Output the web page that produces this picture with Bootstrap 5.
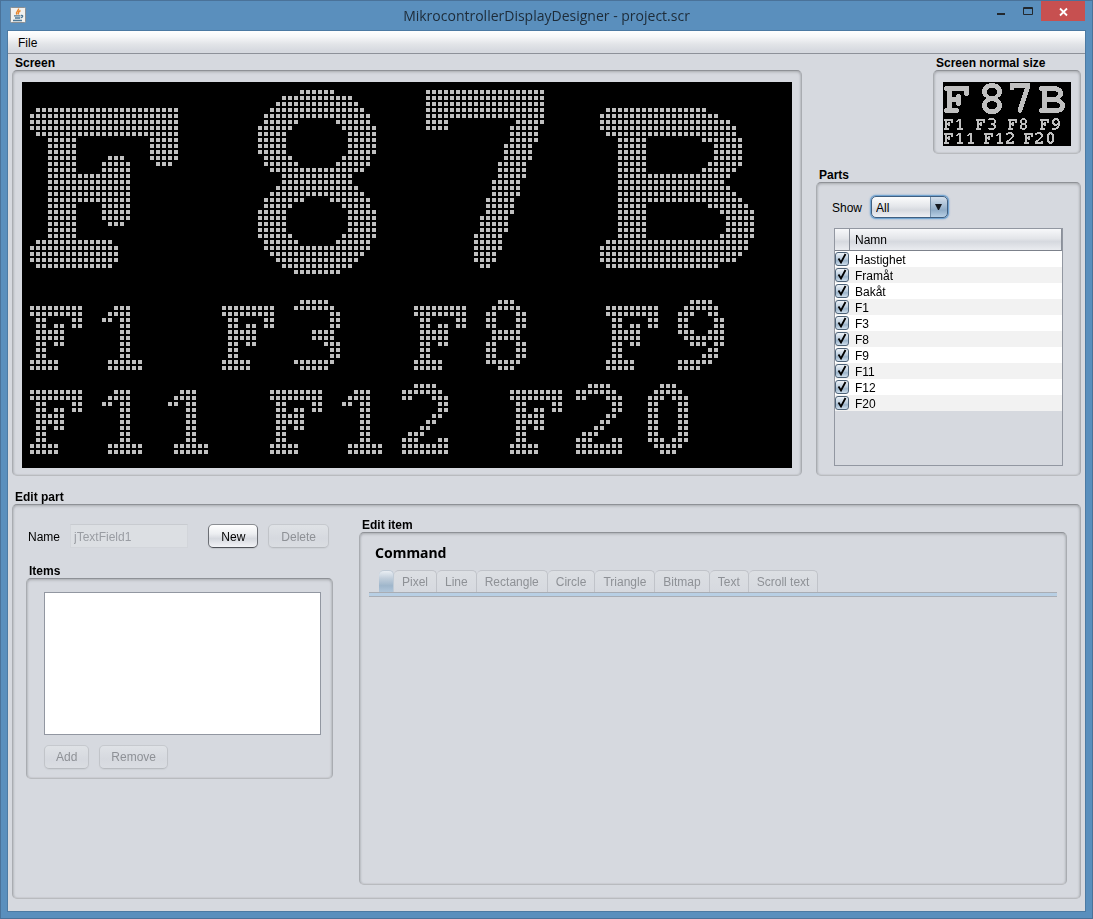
<!DOCTYPE html>
<html lang="en">
<head>
<meta charset="utf-8">
<meta name="viewport" content="width=device-width, initial-scale=1">
<title>MikrocontrollerDisplayDesigner - project.scr</title>
<link href="https://cdn.jsdelivr.net/npm/bootstrap@5.3.0/dist/css/bootstrap.min.css" rel="stylesheet">
<style>
  body { font: 12px/16px "Liberation Sans", Arial, sans-serif; color: #000; background: #5a8fbd; }
  .window-frame { border: 1px solid #4a7299; padding: 0 7px 7px; }
  .title-bar { height: 30px; }
  .title-bar h1 { font: 14px/30px "Open Sans", "Segoe UI", sans-serif; color: #1d2b38; }
  .app-icon { left: 2px; top: 6px; }
  .win-buttons { top: 0; right: 0; }
  .win-buttons button { border: 0; background: none; padding: 0; height: 20px; width: 27px; display: block; }
  .win-buttons .win-close { background: #c75050; width: 44px; }
  .client { background: #d6d9df; outline: 1px solid #4c7aa3; }
  .menu-strip { height: 23px; border-bottom: 1px solid #8d9199; background: linear-gradient(#fff 0%, #f7f8f9 25%, #e2e4e8 60%, #d6d9df 90%); padding: 4px 10px 2px; }
  .menu-strip a { color: #000; text-decoration: none; }
  .workspace { padding: 0 4px 12px; }
  .panel-title { font-size: 12px; line-height: 14px; padding-top: 2px; font-weight: bold; margin: 0 0 0 3px; }
  .panel-box { border: 1px solid; border-color: #8e9196 #a9acb1 #b9bbbf; border-radius: 5px;
    box-shadow: inset 0 2px 3px -1px #a6a9ae, inset 2px 0 2px -1px #bcbfc4, inset -2px 0 2px -1px #bcbfc4, inset 0 -1px 1px #cbced3; }
  .lcd-box { padding: 11px 9px 7px; }
  .lcd-box canvas { display: block; background: #000; }
  .main-gap { gap: 14px; }
  .section-gap { margin-top: 12px; }
  .parts-box { padding: 12px 17px 9px 15px; }
  .parts-box label, .name-row label { line-height: 14px; padding-top: 2px; }
  .show-label { width: 39px; }
  .show-select { appearance: none; width: 77px; height: 22px; padding: 1px 4px 0; font: inherit; color: #000;
    border: 1px solid #3f5f80; border-radius: 5px; box-shadow: 0 0 0 1px #73a4d1, 0 0 2px 1px #73a4d1; outline: 0;
    background: url("data:image/svg+xml,%3Csvg xmlns='http://www.w3.org/2000/svg' width='17' height='22'%3E%3Cpath d='M5 8h7l-3 6h-1z' fill='%23151a20'/%3E%3C/svg%3E") right center no-repeat,
      linear-gradient(90deg, #7590aa 0 1px, transparent 1px) right / 17px 100% no-repeat,
      linear-gradient(#d5e0ec, #a5bdd3 45%, #8facc7 65%, #b8d0e5) right / 17px 100% no-repeat,
      linear-gradient(#fbfcfc, #e5e7eb 45%, #d6d9df 65%, #eff0f4); }
  .show-row { height: 24px; }
  .parts-list { margin: 9px 0 0 2px; border: 1px solid #9297a1; }
  .parts-list table { width: 100%; border-collapse: separate; border-spacing: 0; table-layout: fixed; }
  .parts-list th { height: 22px; padding: 0 5px; font-weight: normal; border-bottom: 1px solid #7c818b; border-right: 1px solid #8a8f99;
    background: linear-gradient(#f7f8fa, #e3e5e9 45%, #d6d9df 60%, #eaecf0); }
  .parts-list th:first-child { width: 15px; padding: 0; }
  .parts-list td { height: 16px; padding: 0 5px; background: #fff; }
  .parts-list td:first-child { padding: 0; }
  .parts-list td label { display: block; }
  .parts-list tr:nth-child(even) td { background: #f2f2f2; }
  .tick { appearance: none; display: block; margin: 0; width: 14px; height: 14px; border: 1px solid #4d6277; border-radius: 3px;
    background: url("data:image/svg+xml,%3Csvg xmlns='http://www.w3.org/2000/svg' width='12' height='12'%3E%3Cpath d='M2.500 5.500l2.500 4L9.500 1' fill='none' stroke='%23000' stroke-width='1.800'/%3E%3C/svg%3E"), linear-gradient(#eef3f8, #b9cbdc 50%, #9db5cb 65%, #d0e0ee); }
  .edit-box { padding: 11px 13px 13px; gap: 26px; }
  .edit-left { width: 307px; }
  .name-row { margin-top: 8px; padding: 0 4px 0 2px; height: 24px; gap: 10px; }
  .name-input { width: 118px; height: 24px; font: inherit; color: #9a9da3; background: #dcdfe3; border: 1px solid #d2d5da; border-top-color: #c8cbd0; padding: 1px 3px 0; }
  .push-btn { height: 24px; border: 1px solid; border-radius: 5px; font: inherit; padding: 0 11px;
    color: #000; border-color: #8b8e93 #6b6e74 #4f5258; background: linear-gradient(#fff, #eceef1 40%, #d6d9df 62%, #f2f3f6); box-shadow: 0 1px 1px #c3c6cb; }
  .name-row .push-btn { padding: 1px 12px 0; }
  .push-btn:disabled { color: #8e9196; border-color: #c6c9ce #c1c4c9 #b8bbc0; background: linear-gradient(#dfe2e6, #d6d9df 60%, #dadde2); box-shadow: 0 1px 1px #cdd0d5; }
  .items-gap { margin-top: 14px; }
  .items-box { padding: 13px 11px 9px 17px; }
  .items-list { width: 100%; height: 143px; border: 1px solid #9297a1; background: #fff; display: block; padding: 0; overflow: auto; border-radius: 0; appearance: none; }
  .item-actions { gap: 10px; padding-top: 10px; }
  .item-box { padding: 10px 9px; }
  .command-title { font: bold 14px/20px "Noto Sans", Tahoma, sans-serif; margin: 0 0 7px 6px; }
  .tab-strip { padding-left: 10px; border-bottom: 1px solid #a9adb4; }
  .tab-strip button { height: 22px; font: inherit; color: #8e9196; padding: 0 8px; background: linear-gradient(#dcdfe3, #d6d9df); border: 1px solid #c0c3c9; border-width: 1px 1px 0 0; border-radius: 5px 5px 0 0; }
  .tab-strip button.tab-current { width: 15px; padding: 0; border-color: #c0cbd6; background: linear-gradient(#e9eef3, #c1cedb 35%, #9fb6cb 70%, #b0c6da); }
  .tab-rule { height: 4px; background: #b8cfe4; border-bottom: 1px solid #a9adb4; }
</style>
</head>
<body>
<div class="window-frame d-flex flex-column min-vh-100">
  <header class="title-bar position-relative">
    <svg class="app-icon position-absolute" width="16" height="16" viewBox="0 0 16 16" aria-hidden="true">
      <rect x=".5" y=".5" width="15" height="15" rx="1" fill="#f1f1ef" stroke="#8b8f92"/>
      <path d="M8.500 1.500c1 2-3.500 3-1.500 6M10.500 3.500c-3 1.500-2 2-2 4" fill="none" stroke="#e8852c" stroke-width="1.400"/>
      <path d="M4 8.800h6.500M5 11h5M3 13.500h9M11 8.500c2.500-.5 2 2-.3 2.300" fill="none" stroke="#4d7896" stroke-width="1.300"/>
    </svg>
    <h1 class="m-0 text-center">MikrocontrollerDisplayDesigner - project.scr</h1>
    <div class="win-buttons position-absolute d-flex">
      <button type="button" aria-label="Minimize"><svg class="d-block" width="27" height="20"><path d="M10 12h8v2h-8z" fill="#22282e"/></svg></button>
      <button type="button" aria-label="Maximize"><svg class="d-block" width="27" height="20"><path d="M9.500 6.500h9v7h-9zM9 7.500h10" fill="none" stroke="#22282e"/></svg></button>
      <button type="button" class="win-close" aria-label="Close"><svg class="d-block" width="44" height="20"><path d="M19 7.500l7 7M26 7.500l-7 7" stroke="#fff" stroke-width="1.800"/></svg></button>
    </div>
  </header>

  <div class="client d-flex flex-column flex-grow-1">
    <nav class="menu-strip"><a href="#">File</a></nav>
    <main class="workspace d-flex flex-column flex-grow-1">
      <div class="d-flex main-gap">
        <section>
          <h2 class="panel-title">Screen</h2>
          <div class="panel-box lcd-box"><canvas id="screen" width="770" height="386" role="img" aria-label="Display, enlarged"></canvas></div>
        </section>
        <div class="d-flex flex-column flex-grow-1">
          <section class="align-self-end">
            <h2 class="panel-title">Screen normal size</h2>
            <div class="panel-box lcd-box"><canvas id="thumb" width="128" height="64" role="img" aria-label="Display, normal size"></canvas></div>
          </section>
          <section class="section-gap d-flex flex-column flex-grow-1">
            <h2 class="panel-title">Parts</h2>
            <div class="panel-box parts-box d-flex flex-column flex-grow-1">
              <div class="show-row d-flex align-items-center">
                <label class="show-label" for="show">Show</label>
                <select id="show" class="show-select"><option>All</option></select>
              </div>
              <div class="parts-list flex-grow-1">
                <table>
                  <thead><tr><th aria-label="Visible"></th><th>Namn</th></tr></thead>
                  <tbody>
                    <tr><td><input class="tick" type="checkbox" id="p1" checked></td><td><label for="p1">Hastighet</label></td></tr>
                    <tr><td><input class="tick" type="checkbox" id="p2" checked></td><td><label for="p2">Framåt</label></td></tr>
                    <tr><td><input class="tick" type="checkbox" id="p3" checked></td><td><label for="p3">Bakåt</label></td></tr>
                    <tr><td><input class="tick" type="checkbox" id="p4" checked></td><td><label for="p4">F1</label></td></tr>
                    <tr><td><input class="tick" type="checkbox" id="p5" checked></td><td><label for="p5">F3</label></td></tr>
                    <tr><td><input class="tick" type="checkbox" id="p6" checked></td><td><label for="p6">F8</label></td></tr>
                    <tr><td><input class="tick" type="checkbox" id="p7" checked></td><td><label for="p7">F9</label></td></tr>
                    <tr><td><input class="tick" type="checkbox" id="p8" checked></td><td><label for="p8">F11</label></td></tr>
                    <tr><td><input class="tick" type="checkbox" id="p9" checked></td><td><label for="p9">F12</label></td></tr>
                    <tr><td><input class="tick" type="checkbox" id="p10" checked></td><td><label for="p10">F20</label></td></tr>
                  </tbody>
                </table>
              </div>
            </div>
          </section>
        </div>
      </div>

      <section class="section-gap d-flex flex-column flex-grow-1">
        <h2 class="panel-title">Edit part</h2>
        <div class="panel-box edit-box d-flex flex-grow-1">
          <div class="edit-left flex-shrink-0">
            <div class="name-row d-flex align-items-center">
              <label for="part-name">Name</label>
              <input class="name-input" id="part-name" type="text" value="jTextField1" disabled>
              <button type="button" class="push-btn ms-auto">New</button>
              <button type="button" class="push-btn" disabled>Delete</button>
            </div>
            <section class="items-gap">
              <h3 class="panel-title">Items</h3>
              <div class="panel-box items-box">
                <select class="items-list" size="8" aria-label="Items"></select>
                <div class="item-actions d-flex">
                  <button type="button" class="push-btn" disabled>Add</button>
                  <button type="button" class="push-btn" disabled>Remove</button>
                </div>
              </div>
            </section>
          </div>
          <section class="d-flex flex-column flex-grow-1">
            <h3 class="panel-title">Edit item</h3>
            <div class="panel-box item-box flex-grow-1">
              <h4 class="command-title">Command</h4>
              <div class="tab-strip d-flex" role="tablist">
                <button type="button" role="tab" class="tab-current" aria-label="None" aria-selected="true" disabled></button>
                <button type="button" role="tab" disabled>Pixel</button>
                <button type="button" role="tab" disabled>Line</button>
                <button type="button" role="tab" disabled>Rectangle</button>
                <button type="button" role="tab" disabled>Circle</button>
                <button type="button" role="tab" disabled>Triangle</button>
                <button type="button" role="tab" disabled>Bitmap</button>
                <button type="button" role="tab" disabled>Text</button>
                <button type="button" role="tab" disabled>Scroll text</button>
              </div>
              <div class="tab-rule"></div>
            </div>
          </section>
        </div>
      </section>
    </main>
  </div>
</div>
<script src="https://cdn.jsdelivr.net/npm/bootstrap@5.3.0/dist/js/bootstrap.bundle.min.js"></script>
<script>
// Display fonts: rows are separated by "/", each row lists lit column runs; "*n" repeats a row.
const glyphs = {
  bigF: "1-24/0-24*3/1-24/3-7 20-24*3/3-7 13-15 20-24/3-7 12-16 21-23/3-7 12-16/3-16*5/3-7 12-16*3/3-7 13-15/3-7*2/1-13/0-14*3/1-13",
  big8: "7-12/4-15/3-16/2-17/1-18/1-6 13-18/0-5 14-19/0-4 15-19*4/1-5 14-18/1-6 13-18/2-17/4-15*2/3-16/2-17/1-7 12-18/1-5 14-18/0-4 15-19*4/0-5 14-19/1-6 13-18/1-18/2-17/3-16/4-15/6-13",
  big7: "0-19*5/0-3 15-19/0-3 14-18/14-18*2/13-17*3/12-16*3/11-15*3/10-14*3/9-13*3/8-12*3/8-11*2/9-10",
  bigB: "1-17/0-19/0-21/0-22/1-22/3-7 17-23/3-7 19-23*3/3-7 18-23/3-7 17-22/3-21/3-20/3-21/3-22/3-23/3-7 18-24/3-7 20-25/3-7 21-25*3/3-7 20-25/1-24/0-24/0-23/0-22/1-19",
  F: "0-8*2/1-2 7-8/1-2 4-5 7-8/1-5*2/1-2 4-5/1-2*2/0-4*2",
  1: "2-4/1-4/0-1 3-4/3-4*6/1-6*2",
  3: "1-5/0-6/6-7*3/3-6*2/5-7/6-7*2/0-6/1-5",
  8: "2-4/1-5/0-1 5-6*3/1-5*2/0-1 5-6*3/0-5/2-4",
  9: "2-5/1-6/0-2 5-6/0-1 6-7*2/0-2 5-7/1-7/2-4 6-7/5-6/4-6/0-5/0-3",
  2: "2-5/0-6/0-1 5-7/6-7*2/5-6/4-5/3-4/1-3/0-2 6-7/0-7*2",
  0: "2-4/1-5/0-2 4-6/0-1 5-6*6/0-2 4-6/1-5/2-4"
};
// Glyph, column and row of everything on the 128 x 64 display.
const placed = [
  ["bigF",1,4],["big8",39,1],["big7",67,1],["bigB",96,4],
  ["F",1,37],["1",13,37],["F",33,37],["3",45,36],["F",65,37],["8",77,36],["F",97,37],["9",109,36],
  ["F",1,51],["1",13,51],["1",24,51],["F",41,51],["1",53,51],["2",63,50],["F",81,51],["2",92,50],["0",104,50]
];
function render(id, pitch, dot, inset) {
  const ctx = document.getElementById(id).getContext("2d");
  ctx.fillStyle = "#c0c0c0";
  for (const [name, col, top] of placed) {
    let row = top;
    for (const line of glyphs[name].split("/")) {
      const [runs, times] = line.split("*");
      for (let n = 0; n < (times || 1); n++, row++)
        for (const run of runs.split(" ")) {
          const [a, b] = run.split("-").map(Number);
          for (let c = a; c <= b; c++)
            ctx.fillRect(inset + (col + c) * pitch, inset + row * pitch, dot, dot);
        }
    }
  }
}
render("screen", 6, 4, 2);
render("thumb", 1, 1, 0);
</script>
</body>
</html>
